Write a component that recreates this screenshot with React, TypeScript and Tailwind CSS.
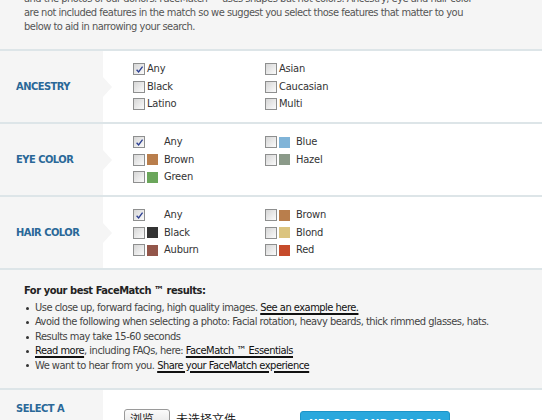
import type { ReactNode } from "react";

const base = "font-['DejaVu_Sans_Condensed','DejaVu_Sans',sans-serif]";

function Box({ checked }: { checked?: boolean }) {
  return (
    <span className="inline-flex h-[12px] w-[12px] shrink-0 items-center justify-center border border-[#8e8f8f] bg-gradient-to-br from-[#d6d6d6] to-[#fbfbfb]">
      {checked ? (
        <svg viewBox="0 0 10 10" className="h-[9px] w-[9px]">
          <path d="M1.8 5.2 L4 7.6 L8.4 1.8" fill="none" stroke="#2c3f92" strokeWidth="1.5" />
        </svg>
      ) : null}
    </span>
  );
}

type Opt = { label: string; checked?: boolean; swatch?: string | null };

function Option({ o, swatches }: { o: Opt; swatches: boolean }) {
  return (
    <label className="flex h-[17.5px] items-center">
      <Box checked={o.checked} />
      {swatches ? (
        <span
          className="ml-[2px] h-[11px] w-[11px] shrink-0"
          style={{ background: o.swatch ?? "transparent" }}
        />
      ) : null}
      <span className={swatches ? "ml-[6px]" : "ml-[2px]"}>{o.label}</span>
    </label>
  );
}

function Section({ label, children }: { label: ReactNode; children: ReactNode }) {
  return (
    <div className="flex border-b-2 border-[#dde5e8]">
      <div className="relative flex w-[103px] shrink-0 items-center bg-[#f5f5f5] pl-4">
        <span className="text-[11px] font-bold leading-[14px] tracking-[-0.5px] text-[#2a6898]">{label}</span>
        <span className="absolute left-full top-1/2 -translate-y-1/2 border-y-[10px] border-l-[9px] border-y-transparent border-l-[#f5f5f5]" />
      </div>
      <div className="flex-1 pb-[9px] pl-[30px] pt-[9.5px]">{children}</div>
    </div>
  );
}

function Options({ opts, swatches }: { opts: Opt[]; swatches: boolean }) {
  return (
    <div className="grid grid-cols-[132px_132px] grid-flow-col grid-rows-3 text-[11px] tracking-[-0.2px] text-[#333]">
      {opts.map((o) => (
        <Option key={o.label} o={o} swatches={swatches} />
      ))}
    </div>
  );
}

const ancestry: Opt[] = [
  { label: "Any", checked: true },
  { label: "Black" },
  { label: "Latino" },
  { label: "Asian" },
  { label: "Caucasian" },
  { label: "Multi" },
];

const eyes: Opt[] = [
  { label: "Any", checked: true, swatch: null },
  { label: "Brown", swatch: "#b97e4c" },
  { label: "Green", swatch: "#6ba65b" },
  { label: "Blue", swatch: "#80b4d8" },
  { label: "Hazel", swatch: "#8b9a89" },
];

const hair: Opt[] = [
  { label: "Any", checked: true, swatch: null },
  { label: "Black", swatch: "#333333" },
  { label: "Auburn", swatch: "#93564a" },
  { label: "Brown", swatch: "#b97e4c" },
  { label: "Blond", swatch: "#dbc47f" },
  { label: "Red", swatch: "#c64b2b" },
];

function A({ children }: { children: ReactNode }) {
  return <a className="text-[#111] underline decoration-[1.5px] underline-offset-2">{children}</a>;
}

export default function App() {
  return (
    <div className={`${base} h-[420px] w-[550px] overflow-hidden bg-white`}>
      <div className="-mt-[8px] w-[542px]">
        <div className="border-b-2 border-[#dde5e8] bg-[#f5f5f5] pb-[15px] pl-[24px] text-[11px] leading-[14px] tracking-[-0.5px] text-[#555]">
          <div>and the photos of our donors. FaceMatch ™ uses shapes but not colors. Ancestry, eye and hair color</div>
          <div>are not included features in the match so we suggest you select those features that matter to you</div>
          <div>below to aid in narrowing your search.</div>
        </div>

        <Section label="ANCESTRY">
          <Options opts={ancestry} swatches={false} />
        </Section>
        <Section label="EYE COLOR">
          <Options opts={eyes} swatches />
        </Section>
        <Section label="HAIR COLOR">
          <Options opts={hair} swatches />
        </Section>

        <div className="border-b-2 border-[#dde5e8] bg-[#f5f5f5] pb-[15px] pl-[24px] pt-[13px] text-[11px] tracking-[-0.5px] text-[#444]">
          <div className="text-[11px] font-bold leading-[16px] tracking-[-0.45px] text-[#222]">For your best FaceMatch ™ results:</div>
          <ul className="mt-[2px] leading-[14.4px]">
            {[
              <>Use close up, forward facing, high quality images. <A>See an example here.</A></>,
              <>Avoid the following when selecting a photo: Facial rotation, heavy beards, thick rimmed glasses, hats.</>,
              <>Results may take 15-60 seconds</>,
              <><A>Read more</A>, including FAQs, here: <A>FaceMatch ™ Essentials</A></>,
              <>We want to hear from you. <A>Share your FaceMatch experience</A></>,
            ].map((c, i) => (
              <li key={i} className="flex items-center">
                <span className="ml-[2px] mr-[6px] h-[3px] w-[3px] shrink-0 rounded-full bg-[#333]" />
                <span>{c}</span>
              </li>
            ))}
          </ul>
        </div>

        <div className="flex">
          <div className="w-[103px] shrink-0 bg-[#f5f5f5] pl-4 pt-[5px]">
            <span className="text-[11px] font-bold leading-[14px] tracking-[-0.5px] text-[#2a6898]">
              SELECT A
              <br />
              PHOTO TO
            </span>
          </div>
          <div className="flex items-start pl-[21px] pt-[19px]">
            <button className="h-[20px] w-[46px] rounded-[3px] border border-[#9a9a9a] bg-gradient-to-b from-[#fbfbfb] to-[#e2e2e2] font-['Noto_Sans_CJK_SC',sans-serif] text-[12px] leading-[18px] text-[#222]">
              浏览...
            </button>
            <span className="ml-[6px] font-['Noto_Sans_CJK_SC',sans-serif] text-[12px] leading-[20px] text-[#222]">
              未选择文件
            </span>
            <button className="ml-[64px] mt-[2px] h-[26px] w-[150px] rounded-[3px] border border-[#1d94c7] bg-[#2aa8dd] text-[12px] font-bold text-white">
              UPLOAD AND SEARCH
            </button>
          </div>
        </div>
      </div>
    </div>
  );
}
